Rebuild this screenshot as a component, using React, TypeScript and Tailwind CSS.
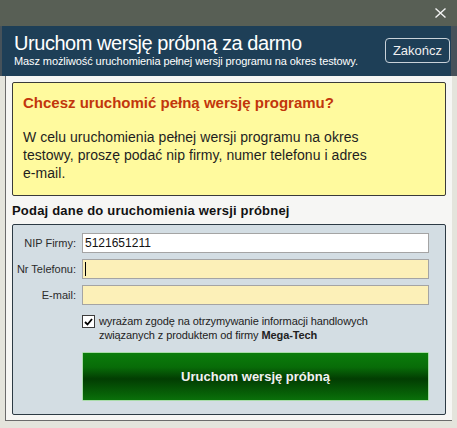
import type { ReactNode } from "react";

const FONT = "font-['Liberation_Sans',Arial,sans-serif]";

function Field({ label, value, yellow, caret }: { label: string; value?: string; yellow?: boolean; caret?: boolean }) {
  return (
    <div className="flex items-center">
      <label className="w-[66px] pr-[3px] text-right text-[11px] text-[#2b2b2b]">{label}</label>
      <div
        className={`ml-[3px] flex h-[20px] w-[347px] items-center border border-[#a4a4a4] px-[2px] text-[12px] text-[#111] ${
          yellow ? "bg-[#fcf0b8]" : "bg-white"
        }`}
      >
        {caret ? <span className="h-[14px] w-px bg-black" /> : null}
        {value}
      </div>
    </div>
  );
}

function Check({ children }: { children: ReactNode }) {
  return (
    <div className="ml-[69px] flex items-start gap-[4px]">
      <span className="mt-[1px] flex h-[13px] w-[13px] shrink-0 items-center justify-center border border-[#3c3c3c] bg-white">
        <svg width="9" height="8" viewBox="0 0 9 8">
          <path d="M1 4 L3.5 6.5 L8 1" fill="none" stroke="#000" strokeWidth="1.8" />
        </svg>
      </span>
      <p className="text-[11px] leading-[14px] tracking-[-0.1px] text-[#222]">{children}</p>
    </div>
  );
}

export default function App() {
  return (
    <div className={`flex h-[428px] w-[457px] flex-col bg-[#e4e4dc] ${FONT}`}>
      <div className="flex h-[26px] shrink-0 items-center justify-end bg-[#585f55] pr-[11px]">
        <svg width="11" height="10" viewBox="0 0 11 10">
          <path d="M0.5 0.5 L10.5 9.5 M10.5 0.5 L0.5 9.5" stroke="#f2f2f2" strokeWidth="1.4" />
        </svg>
      </div>

      <div className="flex h-[50px] shrink-0 bg-[#46525a] pl-[2px] pr-[6px]">
        <header className="flex flex-1 items-start justify-between bg-[#1e3f57] pl-[12px] pr-[1px]">
          <div className="pt-[5px] text-white">
            <h1 className="text-[20px] leading-[24px] tracking-[-0.45px]">Uruchom wersję próbną za darmo</h1>
            <p className="text-[11px] leading-[13px] tracking-[-0.1px]">
              Masz możliwość uruchomienia pełnej wersji programu na okres testowy.
            </p>
          </div>
          <button
            type="button"
            className="mt-[12px] h-[25px] w-[65px] rounded-[4px] border border-[#c9d2d9] text-[13px] text-[#f0f0f0]"
          >
            Zakończ
          </button>
        </header>
      </div>

      <div className="mb-[7px] ml-[5px] mr-[5px] flex flex-1 flex-col border-b border-l border-[#6b6b6b] bg-[#f6f6f4] pl-[6px] pr-[6px] pt-[6px]">
        <section className="h-[114px] rounded-[2px] border border-[#3a3a3a] bg-[#fffa9e] pl-[10px] pt-[11px]">
          <h2 className="text-[15px] font-bold leading-[18px] text-[#c2360c]">
            Chcesz uruchomić pełną wersję programu?
          </h2>
          <p className="mt-[16px] text-[14px] leading-[18px] tracking-[0.05px] text-[#1e1e1e]">
            W celu uruchomienia pełnej wersji programu na okres
            <br />
            testowy, proszę podać nip firmy, numer telefonu i adres
            <br />
            e-mail.
          </p>
        </section>

        <h3 className="mt-[7px] text-[13px] font-bold leading-[16px] tracking-[0.2px] text-[#111]">
          Podaj dane do uruchomienia wersji próbnej
        </h3>

        <div className="mt-[5px] flex h-[191px] flex-col rounded-[2px] border border-[#2c3a44] bg-[#d3dde3] pt-[8px]">
          <div className="flex flex-col gap-[6px]">
            <Field label="NIP Firmy:" value="5121651211" />
            <Field label="Nr Telefonu:" yellow caret />
            <Field label="E-mail:" yellow />
          </div>
          <div className="mt-[9px]">
            <Check>
              wyrażam zgodę na otrzymywanie informacji handlowych
              <br />
              związanych z produktem od firmy <b>Mega-Tech</b>
            </Check>
          </div>
          <button
            type="button"
            className="ml-[69px] mt-[10px] h-[49px] w-[347px] rounded-[1px] border border-[#a9dca9] bg-[linear-gradient(to_bottom,#0b7d0b_0%,#086c08_30%,#023d02_55%,#075f07_85%,#0a700a_100%)] text-[13px] font-bold text-[#f2f2f2]"
          >
            Uruchom wersję próbną
          </button>
        </div>
      </div>
    </div>
  );
}
